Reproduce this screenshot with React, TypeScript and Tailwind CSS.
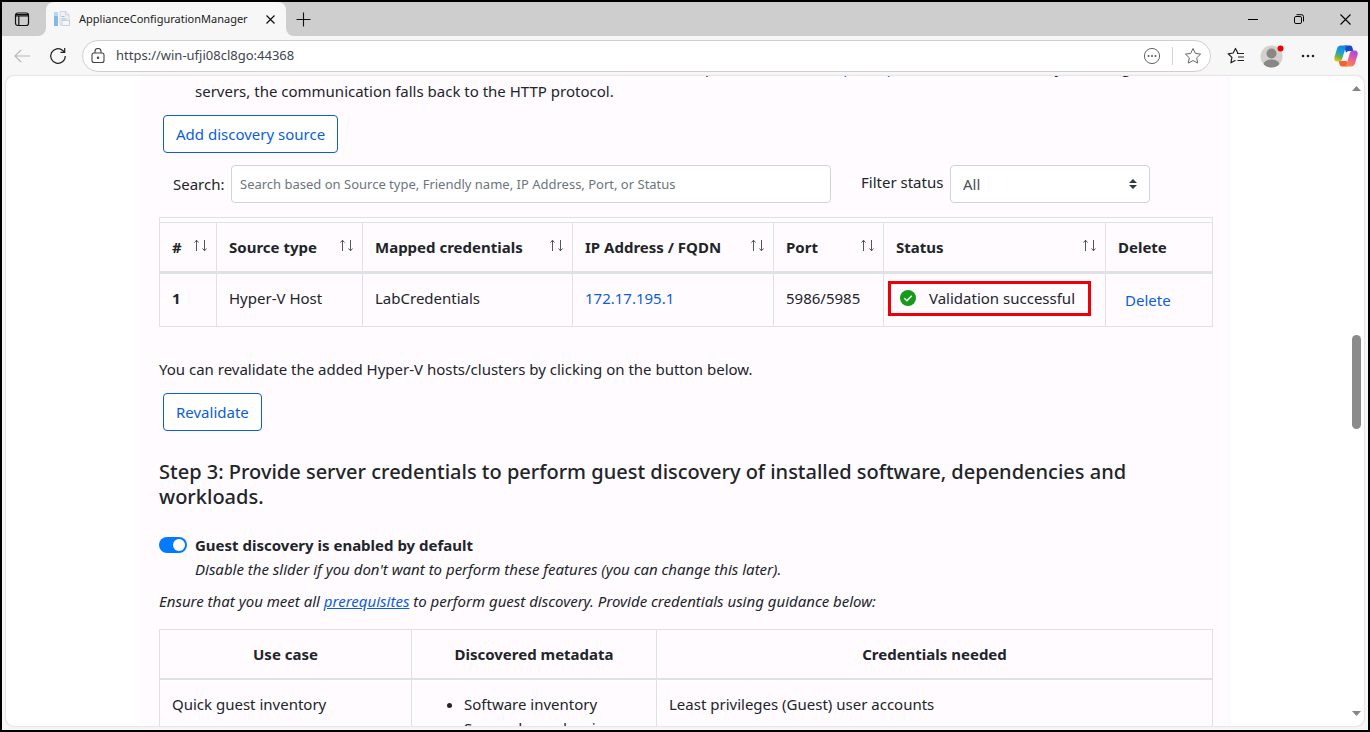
import React from "react";

const border = "border border-[#dee2e6]";

function Sort() {
  return (
    <button type="button" aria-label="Sort" className="-mt-1 text-[#4f5763]">
      <svg width="16" height="14" viewBox="0 0 16 14" fill="none" stroke="currentColor" strokeWidth="1">
        <path d="M4.5 13V2M2.500 4.500l2-2.300 2 2.300M12.5 2v11M10.500 10.500l2 2.300 2-2.300" />
      </svg>
    </button>
  );
}

function TabStrip() {
  return (
    <header className="flex h-[34px] items-stretch bg-[#cecece]">
      <div className="bg-[#f7f7f7]">
        <button type="button" aria-label="Tab actions" className="flex h-full w-11 items-center justify-center rounded-br-lg bg-[#cecece] pr-1">
          <svg width="16" height="16" viewBox="0 0 16 16" fill="none" stroke="#111" strokeWidth="1.2">
            <rect x="1.5" y="2" width="13" height="12.5" rx="2.2" />
            <path d="M2 3.500h12M1.5 4.800h13M4.800 5v9.500" />
          </svg>
        </button>
      </div>
      <div className="flex w-60 items-center rounded-t-lg bg-[#f7f7f7] pl-2 text-[11px] text-[#1b1b1b]">
        <svg width="16" height="16" viewBox="0 0 16 16">
          <rect x="0" y="1" width="4" height="14" fill="#85b8e4" />
          <rect x="0" y="1" width="4" height="4" fill="#b4d7f3" />
          <path d="M6 .5h6l3 3V14H6z" fill="#eef2f6" stroke="#c9d2dc" strokeWidth=".8" />
          <path d="M11.500 .5V4H15" fill="none" stroke="#c3ccd6" strokeWidth=".8" />
          <path d="M7.500 5.500h3M7.500 8h5" stroke="#a9b9ca" />
          <rect x="8" y="9.500" width="7.500" height="5" fill="#f5f7fa" stroke="#bcc8d5" strokeWidth=".8" />
        </svg>
        <span className="ml-[9px] flex-1 whitespace-nowrap">ApplianceConfigurationManager</span>
        <button type="button" aria-label="Close tab" className="mr-[11px]">
          <svg width="9" height="9" viewBox="0 0 9 9" stroke="#111" strokeWidth="1.2"><path d="M.5.5l8 8M8.5.5l-8 8" /></svg>
        </button>
      </div>
      <div className="flex-1 bg-[#f7f7f7]">
        <div className="flex h-full items-center rounded-bl-lg bg-[#cecece] pl-[10px]">
          <button type="button" aria-label="New tab" className="mr-auto">
            <svg width="15" height="15" viewBox="0 0 15 15" stroke="#111" strokeWidth="1.1"><path d="M7.5.5v14M.5 7.5h14" /></svg>
          </button>
          <div className="flex items-center gap-9 pr-[17px]">
            <button type="button" aria-label="Minimize">
              <svg width="10" height="10" viewBox="0 0 10 10" stroke="#000"><path d="M0 5.5h10" /></svg>
            </button>
            <button type="button" aria-label="Restore">
              <svg width="10" height="10" viewBox="0 0 10 10" fill="none" stroke="#000"><rect x=".5" y="2.5" width="7" height="7" rx="1.4" /><path d="M2.5.7H7.5a2 2 0 0 1 2 2V7.5" /></svg>
            </button>
            <button type="button" aria-label="Close">
              <svg width="11" height="11" viewBox="0 0 11 11" stroke="#000" strokeWidth="1.1"><path d="M.5.5l10 10M10.500 .5l-10 10" /></svg>
            </button>
          </div>
        </div>
      </div>
    </header>
  );
}

function Copilot() {
  return (
    <svg width="24" height="22" viewBox="0 0 24 22">
      <defs>
        <linearGradient id="cpA" x1="0.5" y1="0" x2="0.2" y2="1">
          <stop offset="0" stopColor="#1a86e0" />
          <stop offset="0.4" stopColor="#18a0d8" />
          <stop offset="0.7" stopColor="#6cb33e" />
          <stop offset="1" stopColor="#f6c90e" />
        </linearGradient>
        <linearGradient id="cpB" x1="0.7" y1="0" x2="0.3" y2="1">
          <stop offset="0" stopColor="#a04be8" />
          <stop offset="0.5" stopColor="#e85a9c" />
          <stop offset="1" stopColor="#fb8b3c" />
        </linearGradient>
      </defs>
      <path d="M11 .5h5c1.300 0 2 .8 2.400 2l.9 3.500H15c-1.500 0-2.300.7-2.800 2.200L10 .9z" fill="#1b48c8" />
      <path d="M13 21.500H8c-1.300 0-2-.8-2.400-2l-.9-3.500H9c1.500 0 2.300-.7 2.800-2.200l2.200 6.800z" fill="#f2603c" />
      <path d="M7 .5h6.500c-1.200.3-1.800 1.500-2.200 2.900L8.200 13.700c-.6 2-1.600 2.900-3.500 2.900H3.200C.7 16.600-.2 14.500.5 12L3 3.800C3.700 1.600 4.900.5 7 .5z" fill="url(#cpA)" />
      <path d="M17 21.500h-6.500c1.200-.3 1.800-1.500 2.200-2.900l3.100-10.300c.6-2 1.600-2.900 3.500-2.900h1.500c2.500 0 3.400 2.100 2.700 4.600L21 18.200c-.7 2.200-1.900 3.300-4 3.300z" fill="url(#cpB)" />
      <path d="M13.200 7h2.200l-3.200 9H8.900c.7-.5 1-1.200 1.300-2.100l1.400-4.700c.4-1.200.8-1.900 1.600-2.200z" fill="#f7f7f7" />
    </svg>
  );
}

const starPath = "M9 1.500l2.300 4.900 5.300.7-3.900 3.700 1 5.300L9 13.500l-4.700 2.600 1-5.300L1.400 7.100l5.300-.7z";

function Toolbar() {
  return (
    <nav className="flex h-10 items-center bg-[#f7f7f7] pl-3 pr-[10px]">
      <button type="button" aria-label="Back">
        <svg width="16" height="14" viewBox="0 0 16 14" fill="none" stroke="#b5b5b5" strokeWidth="1.1"><path d="M16 7H1M7 1L1 7l6 6" /></svg>
      </button>
      <button type="button" aria-label="Refresh" className="ml-[19px]">
        <svg width="18" height="18" viewBox="0 0 18 18" fill="none" stroke="#222" strokeWidth="1.200"><path d="M16.300 9A7.300 7.300 0 1 1 13.800 3.500L15.500 5M15.700 1v4.300h-4.300" /></svg>
      </button>
      <div className="ml-[15px] flex h-8 flex-1 items-center rounded-full border border-[#cfcfcf] bg-white pl-2 pr-2">
        <svg width="14" height="16" viewBox="0 0 14 16" fill="none" stroke="#444" strokeWidth="1.1">
          <rect x="1" y="5" width="12" height="9.500" rx="2" /><path d="M4 5V3.500a3 3 0 0 1 6 0V5" /><circle cx="7" cy="9.700" r=".7" fill="#444" />
        </svg>
        <input aria-label="Address" defaultValue="https://win-ufji08cl8go:44368" className="ml-[11px] min-w-0 flex-1 bg-transparent text-[13px] text-[#3f4450] outline-none" />
        <button type="button" aria-label="More page actions">
          <svg width="18" height="18" viewBox="0 0 18 18" fill="none" stroke="#666"><circle cx="9" cy="9" r="7.600" /><g fill="#555" stroke="none"><circle cx="5.500" cy="9" r="1" /><circle cx="9" cy="9" r="1" /><circle cx="12.500" cy="9" r="1" /></g></svg>
        </button>
        <span className="mx-[11px] h-[18px] w-px bg-[#d4d4d4]" />
        <button type="button" aria-label="Add to favorites">
          <svg width="18" height="18" viewBox="0 0 18 18" fill="none" stroke="#666" strokeLinejoin="round"><path d={starPath} /></svg>
        </button>
      </div>
      <div className="ml-4 flex items-center">
        <button type="button" aria-label="Favorites">
          <svg width="18" height="18" viewBox="0 0 18 18" fill="none" stroke="#222" strokeWidth="1.200" strokeLinejoin="round"><path d="M11 6.400L8.500 1.500 6.200 6 1.200 6.800l3.700 3.600-1 5.400L8.500 13.300M10 6.500h7M11 10h6M10.500 13.500H17" /></svg>
        </button>
        <button type="button" aria-label="Profile" className="ml-[15px]">
          <svg width="24" height="24" viewBox="0 0 24 24">
            <defs><clipPath id="face"><circle cx="11.500" cy="12.500" r="11" /></clipPath></defs>
            <circle cx="11.500" cy="12.500" r="11" fill="#d3d0cd" />
            <g fill="#8a8785" clipPath="url(#face)"><circle cx="11.500" cy="9.500" r="5" /><ellipse cx="11.500" cy="20.500" rx="8" ry="5" /></g>
            <circle cx="20.500" cy="4.500" r="3" fill="#f00000" />
          </svg>
        </button>
        <button type="button" aria-label="Settings" className="ml-[17px]">
          <svg width="14" height="4" viewBox="0 0 14 4" fill="#222"><circle cx="2" cy="2" r="1.300" /><circle cx="7" cy="2" r="1.300" /><circle cx="12" cy="2" r="1.300" /></svg>
        </button>
        <button type="button" aria-label="Copilot" className="ml-[19px]"><Copilot /></button>
      </div>
    </nav>
  );
}

const columns = [
  { name: "#", width: "w-[57px]" },
  { name: "Source type", width: "w-[146px]" },
  { name: "Mapped credentials", width: "w-[210px]" },
  { name: "IP Address / FQDN", width: "w-[201px]" },
  { name: "Port", width: "w-[110px]" },
  { name: "Status", width: "w-[222px]" },
  { name: "Delete", width: "w-[107px]" },
];

function SourcesTable() {
  return (
    <div className="mt-[14px]">
      <div className="h-[5px] border-x border-t border-[#dee2e6]" />
      <table className="w-full table-fixed border-collapse text-left">
        <thead>
          <tr className="h-[50px]">
            {columns.map((c) => (
              <th key={c.name} scope="col" className={`${border} ${c.width} border-b-[3px] pl-3 pr-2 font-bold`}>
                <span className="flex items-center justify-between whitespace-nowrap">
                  {c.name}
                  {c.name !== "Delete" && <Sort />}
                </span>
              </th>
            ))}
          </tr>
        </thead>
        <tbody className="align-top">
          <tr className="h-[54px]">
            <th scope="row" className={`${border} px-3 pt-3 font-bold`}>1</th>
            <td className={`${border} px-3 pt-3`}>Hyper-V Host</td>
            <td className={`${border} px-3 pt-3`}>LabCredentials</td>
            <td className={`${border} px-3 pt-3`}><a href="#source" className="text-[#0b5ed7]">172.17.195.1</a></td>
            <td className={`${border} pt-3 pl-3`}>5986/5985</td>
            <td className={`${border} px-1 pt-[7px]`}>
              <span className="flex h-[35px] w-[203px] items-center border-3 border-[#ec0006] pb-[2px] pl-[9px] whitespace-nowrap">
                <svg width="16" height="16" viewBox="0 0 16 16"><circle cx="8" cy="8" r="8" fill="#159a1b" /><path d="M4.300 8.300l2.600 2.500 4.900-5" fill="none" stroke="#fff" strokeWidth="1.500" /></svg>
                <span className="ml-[13px]">Validation successful</span>
              </span>
            </td>
            <td className={`${border} px-[19px] pt-[14px]`}><button type="button" className="text-[#0b5ed7]">Delete</button></td>
          </tr>
        </tbody>
      </table>
    </div>
  );
}

function GuidanceTable() {
  return (
    <table className="mt-4 w-full table-fixed border-collapse">
      <thead>
        <tr className="h-[49px]">
          <th className={`${border} w-[252px] border-b-2`}>Use case</th>
          <th className={`${border} w-[245px] border-b-2`}>Discovered metadata</th>
          <th className={`${border} w-[556px] border-b-2`}>Credentials needed</th>
        </tr>
      </thead>
      <tbody className="align-top">
        <tr>
          <td className={`${border} p-3`}>Quick guest inventory</td>
          <td className={`${border} p-3`}>
            <ul className="list-disc pl-10">
              <li>Software inventory</li>
              <li>Server dependencies</li>
            </ul>
          </td>
          <td className={`${border} p-3`}>Least privileges (Guest) user accounts</td>
        </tr>
      </tbody>
    </table>
  );
}

const outlineButton = "ml-1 h-[38px] rounded border border-[#0b5ed7] bg-white px-3 text-[#0b5ed7]";

export default function App() {
  return (
    <div className="flex h-screen flex-col overflow-hidden border-2 border-black bg-[#f7f7f7] font-['Noto_Sans','Open_Sans',sans-serif]">
      <TabStrip />
      <Toolbar />
      <div className="mx-1 mb-1 flex min-h-0 flex-1 overflow-hidden rounded-lg bg-white shadow-[0_0_2px_#bbb]">
        <main className="min-w-0 flex-1 overflow-hidden pl-[133px] pr-[117px]">
          <div className="-mt-[21px] border-r-4 border-[#f9fbff] bg-[#fffbff] pl-5 pr-[14px] text-[15px] leading-6 text-[#212529]">
            <p className="pl-9">
              Hosts must be reachable over HTTPS. If a host does not meet the HTTPS port and certificate{" "}
              <a href="#prerequisites" className="text-[#0b5ed7]">prerequisites</a> or is not correctly resolving<br />
              servers, the communication falls back to the HTTP protocol.
            </p>
            <button type="button" className={`${outlineButton} mt-3 block`}>Add discovery source</button>
            <form className="mt-3 flex items-center pl-[14px]">
              <label htmlFor="search" className="w-[58px]">Search:</label>
              <input id="search" placeholder="Search based on Source type, Friendly name, IP Address, Port, or Status" className="h-[38px] w-[600px] rounded border border-[#ced4da] bg-white px-2 text-[13px] placeholder:text-[#6c757d]" />
              <label htmlFor="filter" className="ml-[30px] w-[89px] pb-1">Filter status</label>
              <div className="relative w-[200px]">
                <select id="filter" className="h-[38px] w-full appearance-none rounded border border-[#ced4da] bg-white px-3 text-[#495057]">
                  <option>All</option>
                </select>
                <svg className="pointer-events-none absolute top-[14px] right-[13px]" width="8" height="10" viewBox="0 0 8 10" fill="#343a40"><path d="M4 0L0 4h8zM4 10L0 6h8z" /></svg>
              </div>
            </form>
            <SourcesTable />
            <p className="mt-[30px]">You can revalidate the added Hyper-V hosts/clusters by clicking on the button below.</p>
            <button type="button" className={`${outlineButton} mt-3 block`}>Revalidate</button>
            <h2 className="mt-7 text-[20px] leading-[25px] font-medium">
              Step 3: Provide server credentials to perform guest discovery of installed software, dependencies and workloads.
            </h2>
            <div className="mt-6 flex items-center">
              <label className="flex items-center font-bold">
                <input type="checkbox" role="switch" defaultChecked className="peer sr-only" />
                <span className="flex h-4 w-7 items-center justify-end rounded-full bg-[#007bff] pr-[2px]"><span className="size-3 rounded-full bg-white" /></span>
                <span className="ml-2">Guest discovery is enabled by default</span>
              </label>
            </div>
            <p className="pl-9 italic">Disable the slider if you don't want to perform these features (you can change this later).</p>
            <p className="mt-2 italic">
              Ensure that you meet all <a href="#guest-prerequisites" className="text-[#0b5ed7] underline">prerequisites</a> to perform guest discovery. Provide credentials using guidance below:
            </p>
            <GuidanceTable />
          </div>
        </main>
        <div className="flex w-4 flex-col items-center py-[10px]" aria-hidden="true">
          <svg width="9" height="5" viewBox="0 0 9 5" fill="#858585"><path d="M4.500 0L9 5H0z" /></svg>
          <div className="mt-[244px] h-[94px] w-[9px] rounded-full bg-[#8b8b8b]" />
          <svg className="mt-auto" width="9" height="5" viewBox="0 0 9 5" fill="#858585"><path d="M0 0h9L4.500 5z" /></svg>
        </div>
      </div>
    </div>
  );
}
